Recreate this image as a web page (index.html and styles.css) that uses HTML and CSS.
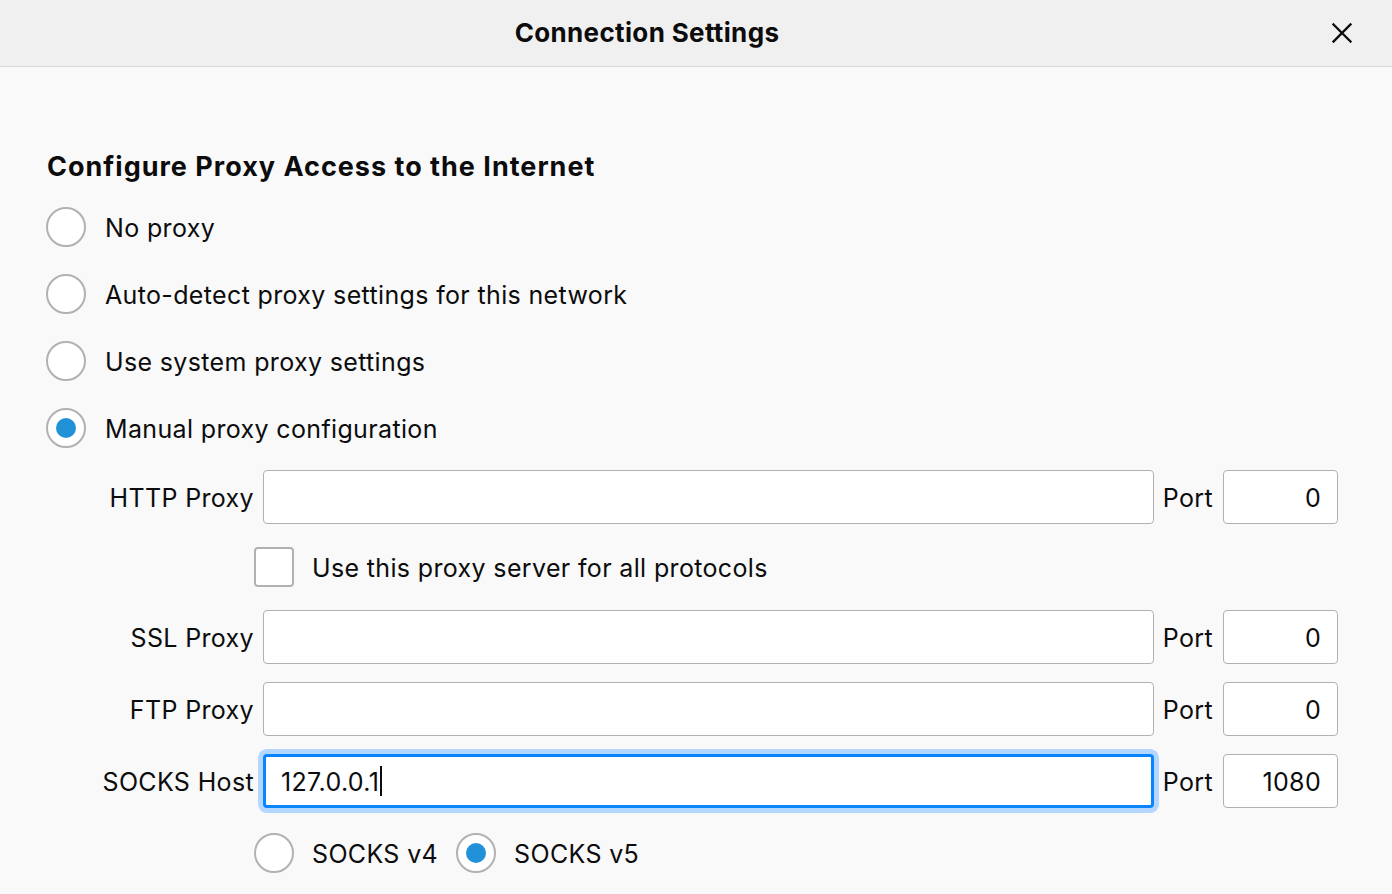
FILE: index.html
```html
<!DOCTYPE html>
<html lang="en">
<head>
<meta charset="utf-8">
<title>Connection Settings</title>
<link rel="stylesheet" href="styles.css">
</head>
<body>
<div class="dialog">
  <header class="titlebar">
    <div class="title">Connection Settings</div>
    <button class="close" aria-label="Close">
      <svg width="22" height="22" viewBox="0 0 22 22"><path d="M2.5 2.5 L19.5 19.5 M19.5 2.5 L2.5 19.5" stroke="#0c0c0d" stroke-width="2.3" stroke-linecap="square" fill="none"/></svg>
    </button>
  </header>
  <main class="content">
    <h1 class="heading">Configure Proxy Access to the Internet</h1>
    <div class="radio-list">
      <label class="radio-row"><span class="radio"></span><span>No proxy</span></label>
      <label class="radio-row"><span class="radio"></span><span>Auto-detect proxy settings for this network</span></label>
      <label class="radio-row"><span class="radio"></span><span>Use system proxy settings</span></label>
      <label class="radio-row"><span class="radio checked"></span><span>Manual proxy configuration</span></label>
    </div>
    <div class="proxy-grid">
      <span class="flabel">HTTP Proxy</span>
      <div class="field"></div>
      <span class="plabel">Port</span>
      <div class="field port">0</div>

      <label class="check-row"><span class="checkbox"></span><span>Use this proxy server for all protocols</span></label>

      <span class="flabel">SSL Proxy</span>
      <div class="field"></div>
      <span class="plabel">Port</span>
      <div class="field port">0</div>

      <span class="flabel">FTP Proxy</span>
      <div class="field"></div>
      <span class="plabel">Port</span>
      <div class="field port">0</div>

      <span class="flabel">SOCKS Host</span>
      <div class="field focused">127.0.0.1<span class="caret"></span></div>
      <span class="plabel">Port</span>
      <div class="field port">1080</div>

      <div class="socks-row">
        <label class="radio-row small"><span class="radio"></span><span>SOCKS v4</span></label>
        <label class="radio-row small"><span class="radio checked"></span><span>SOCKS v5</span></label>
      </div>
    </div>
  </main>
</div>
</body>
</html>
```

FILE: styles.css
```css
* { box-sizing: border-box; }
html, body {
  margin: 0;
  padding: 0;
  background: #f9f9fa;
}
body {
  font-family: Inter, "Noto Sans", "Liberation Sans", sans-serif;
  color: #0c0c0d;
  font-size: 25px;
  letter-spacing: 0.35px;
  width: 1392px;
  height: 894px;
  overflow: hidden;
}
.titlebar {
  height: 67px;
  background: #f0f0f0;
  border-bottom: 1px solid #d7d7db;
  display: grid;
  grid-template-columns: 1fr 98px;
  align-items: center;
}
.title {
  text-align: center;
  font-weight: 700;
  font-size: 26px;
  letter-spacing: 0.35px;
  padding-bottom: 2px;
}
.close {
  border: none;
  background: transparent;
  padding: 0;
  width: 98px;
  height: 66px;
  display: flex;
  align-items: center;
  justify-content: center;
  padding-right: 2px;
}
.content {
  padding: 83px 54px 0 47px;
}
.heading {
  margin: 0;
  font-size: 27px;
  font-weight: 700;
  letter-spacing: 1px;
  line-height: 34px;
}
.radio-list {
  margin-top: 23px;
  display: flex;
  flex-direction: column;
  gap: 27px;
}
.radio-row {
  display: flex;
  align-items: center;
  gap: 19px;
  height: 40px;
  line-height: 40px;
}
.radio-row > span:last-child {
  padding-top: 2px;
}
.radio {
  width: 40px;
  height: 40px;
  border-radius: 50%;
  border: 2px solid #b1b1b3;
  background: #fff;
  flex: none;
  display: flex;
  align-items: center;
  justify-content: center;
  margin-left: -1px;
}
.radio.checked::after {
  content: "";
  width: 20px;
  height: 20px;
  border-radius: 50%;
  background: #2292d8;
}
.proxy-grid {
  margin-top: 22px;
  display: grid;
  grid-template-columns: 207px 1fr auto 115px;
  column-gap: 9px;
  row-gap: 18px;
  align-items: center;
}
.flabel {
  text-align: right;
  padding-top: 2px;
}
.plabel {
  margin-right: 1px;
  padding-top: 2px;
}
.field {
  height: 54px;
  background: #fff;
  border: 1px solid #b1b1b3;
  border-radius: 4px;
  padding: 2px 16px 0;
  display: flex;
  align-items: center;
}
.field.port {
  justify-content: flex-end;
}
.field.focused {
  border: 3px solid #0a84ff;
  box-shadow: 0 0 0 5px #b3d7fe;
  padding-left: 15px;
}
.caret {
  display: inline-block;
  width: 2px;
  height: 30px;
  background: #0c0c0d;
  margin-left: 1px;
  margin-top: -2px;
}
.check-row {
  grid-column: 1 / -1;
  height: 50px;
  padding-left: 207px;
  display: flex;
  align-items: center;
  gap: 18px;
}
.check-row > span:last-child {
  padding-top: 2px;
}
.checkbox {
  width: 40px;
  height: 40px;
  border: 2px solid #b1b1b3;
  border-radius: 4px;
  background: #fff;
  flex: none;
}
.socks-row {
  grid-column: 1 / -1;
  padding-left: 208px;
  margin-top: 7px;
  display: flex;
  align-items: center;
  gap: 19px;
}
.socks-row .radio-row {
  gap: 18px;
}
```
